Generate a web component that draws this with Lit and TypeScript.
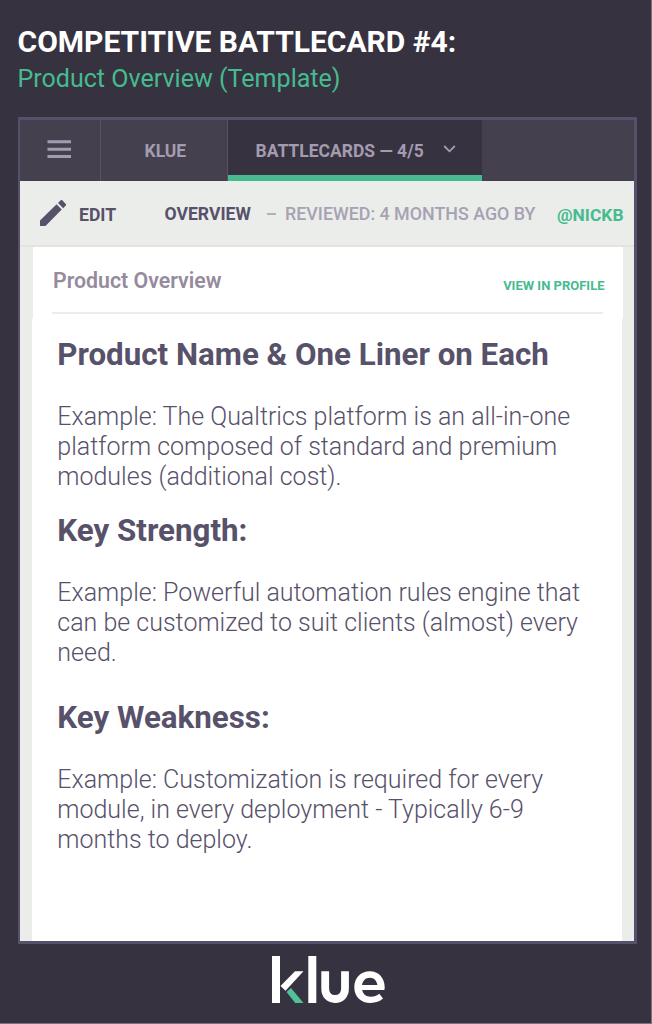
import { LitElement, html, css } from "lit";
import { customElement } from "lit/decorators.js";

interface Section {
  title: string;
  lines: string[];
}

const SECTIONS: Section[] = [
  {
    title: "Product Name & One Liner on Each",
    lines: [
      "Example: The Qualtrics platform is an all-in-one",
      "platform composed of standard and premium",
      "modules (additional cost).",
    ],
  },
  {
    title: "Key Strength:",
    lines: [
      "Example: Powerful automation rules engine that",
      "can be customized to suit clients (almost) every",
      "need.",
    ],
  },
  {
    title: "Key Weakness:",
    lines: [
      "Example: Customization is required for every",
      "module, in every deployment - Typically 6-9",
      "months to deploy.",
    ],
  },
];

@customElement("app-root")
export class AppRoot extends LitElement {
  static styles = css`
    :host {
      display: flex;
      flex-direction: column;
      box-sizing: border-box;
      width: 652px;
      height: 1024px;
      overflow: hidden;
      background: #37323f;
      border-right: 1px solid #77747d;
      border-bottom: 1px solid #77747d;
      font-family: Roboto, "Liberation Sans", sans-serif;
      white-space: nowrap;
    }
    svg {
      display: block;
      flex: none;
    }
    .heading {
      height: 117px;
      box-sizing: border-box;
      padding: 27px 0 0 17.5px;
    }
    .title {
      margin: 0;
      font-size: 30px;
      line-height: 30px;
      font-weight: 700;
      color: #fff;
    }
    .subtitle {
      margin: 7px 0 0;
      font-size: 25.05px;
      line-height: 30px;
      font-weight: 400;
      color: #46bb8f;
    }
    .frame {
      display: flex;
      flex-direction: column;
      flex: none;
      box-sizing: border-box;
      width: 619px;
      height: 827px;
      margin-left: 18px;
      border: 3px solid #56506a;
      border-left-width: 2px;
      background: #ebedea;
    }
    .tabs {
      display: flex;
      height: 61px;
      flex: none;
      background: #45404e;
      color: #a39cb1;
      font-size: 17.5px;
      line-height: 20px;
      font-weight: 700;
    }
    .tab {
      display: flex;
      align-items: center;
      box-sizing: border-box;
      border-right: 1px solid #57525f;
    }
    .menu {
      width: 81px;
      padding: 0 0 3px 27px;
    }
    .klue {
      width: 127px;
      padding-left: 43.5px;
    }
    .active {
      width: 254px;
      padding: 6px 0 0 27.5px;
      background: #37323f;
      border-right: 0;
      border-bottom: 6px solid #47bb8f;
    }
    .chevron {
      margin: -4px 0 0 19px;
    }
    .toolbar {
      display: flex;
      flex: none;
      height: 66px;
      box-sizing: border-box;
      border-bottom: 2px solid #e3e4df;
      padding: 22px 0 0 19px;
      font-size: 17.6px;
      line-height: 22px;
      font-weight: 700;
      color: #57516a;
    }
    .pencil {
      margin-top: -4px;
    }
    .edit {
      width: 38px;
      margin: 1px 0 0 12px;
    }
    .overview {
      width: 87px;
      margin-left: 47.5px;
    }
    .dash {
      width: 9px;
      height: 2px;
      margin: 10px 0 0 15.5px;
      background: #b3afbe;
    }
    .reviewed {
      width: 253px;
      margin-left: 9px;
      font-size: 17.85px;
      font-weight: 500;
      color: #a6a1b3;
    }
    .user {
      margin: 1px 0 0 19px;
      font-size: 17.4px;
      color: #46bb8f;
    }
    .card {
      flex: 1;
      margin: 0 12px 0 12px;
      background: #fff;
    }
    .card-top {
      width: 590px;
      height: 72px;
      margin-bottom: -5px;
      background: #fff;
      border-left: 1px solid #ebedea;
    }
    .card-head {
      display: flex;
      justify-content: space-between;
      box-sizing: border-box;
      height: 67px;
      margin: 0 20px 0 19px;
      padding: 21px 0 0 1px;
      border-bottom: 2px solid #ececec;
    }
    .card-title {
      font-size: 21.3px;
      line-height: 26px;
      font-weight: 600;
      color: #958b9d;
    }
    .link {
      margin: 8px -1.5px 0 0;
      font-size: 13px;
      line-height: 20px;
      font-weight: 700;
      color: #46bb8f;
    }
    .section {
      padding-left: 25.3px;
      color: #57516a;
    }
    .section h2 {
      margin: 0;
      font-size: 31.3px;
      line-height: 40px;
      font-weight: 700;
    }
    .section p {
      margin: 27px 0 0;
      font-size: 25px;
      line-height: 30px;
      font-weight: 300;
    }
    .s0 {
      padding-top: 21px;
    }
    .s1 {
      padding-top: 19px;
    }
    .s2 {
      padding-top: 30px;
    }
    .line {
      display: block;
    }
    .footer {
      padding: 12px 0 0 271px;
    }
  `;

  render() {
    return html`
      <header class="heading">
        <h1 class="title">COMPETITIVE BATTLECARD #4:</h1>
        <p class="subtitle">Product Overview (Template)</p>
      </header>
      <main class="frame">
        <nav class="tabs">
          <div class="tab menu">
            <svg width="25" height="20" viewBox="0 0 25 20" fill="#a39cb1">
              <path d="M.5 1.300h23.500v3H.5zM.5 8.700h23.500v3H.5zM.5 15.900h23.500v3H.5z" />
            </svg>
          </div>
          <div class="tab klue"><span>KLUE</span></div>
          <div class="tab active">
            <span>BATTLECARDS — 4/5</span>
            <svg class="chevron" width="13" height="10" viewBox="0 0 13 10" fill="none" stroke="#a39cb1" stroke-width="1.800">
              <path d="M1.200 2L6.500 7.300L11.800 2" />
            </svg>
          </div>
        </nav>
        <div class="toolbar">
          <svg class="pencil" width="28" height="28" viewBox="0 0 28 28" fill="#57516a">
            <path d="M1 27v-5.600L17.600 5.200L22.700 10.600L6.500 27zM19 3.900L21.700 1.300Q22.500.5 23.300 1.300L26.800 4.900Q27.500 5.700 26.800 6.500L24.200 9.200z" />
          </svg>
          <span class="edit">EDIT</span>
          <span class="overview">OVERVIEW</span>
          <span class="dash"></span>
          <span class="reviewed">REVIEWED: 4 MONTHS AGO BY</span>
          <span class="user">@NICKB</span>
        </div>
        <article class="card">
          <div class="card-top">
            <div class="card-head">
              <span class="card-title">Product Overview</span>
              <span class="link">VIEW IN PROFILE</span>
            </div>
          </div>
          ${SECTIONS.map(
            (s, i) => html`
              <section class="section s${i}">
                <h2>${s.title}</h2>
                <p>${s.lines.map((l) => html`<span class="line">${l}</span>`)}</p>
              </section>
            `
          )}
        </article>
      </main>
      <footer class="footer">
        <svg width="116" height="50" viewBox="0 0 116 50" aria-label="klue">
          <g fill="#fff">
            <path d="M1 0h8v47H1zM37.300 0h8v47h-8z" />
            <path d="M24 15.200h8.500L14.500 34.700l-5-4.700z" />
            <path fill-rule="evenodd" d="M113.300 34H91.200C92 38.300 95.200 40.700 99.800 40.700C103.200 40.700 106 39.800 108.300 37.800L112 42.600C108.800 45.500 104.600 47 99.600 47C90 47 83.300 40.600 83.300 31.200C83.300 22 89.800 15.300 98.700 15.300C107.800 15.300 113.700 22 113.700 31.500C113.700 32.500 113.500 33.300 113.300 34zM91 29H106.400C105.700 24.600 103 21.800 98.800 21.800C94.600 21.800 91.800 24.600 91 29z" />
          </g>
          <path d="M20 32L15.500 36L24.200 47h8.300z" fill="#50c198" />
          <path d="M54.200 15.200V32.500c0 6.500 3.600 10.500 9.800 10.500s10-4 10-10.500V15.200" fill="none" stroke="#fff" stroke-width="7.800" />
        </svg>
      </footer>
    `;
  }
}
